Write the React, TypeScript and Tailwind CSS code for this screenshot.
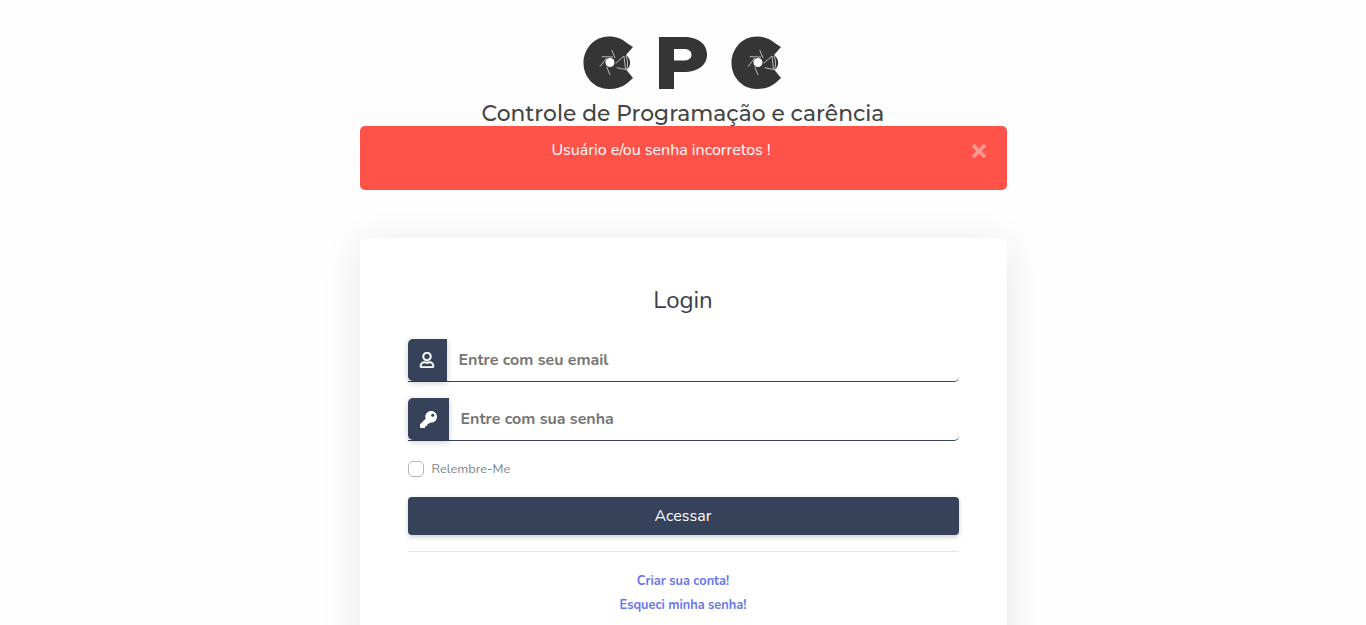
import { FaKey, FaRegUser, FaTimes } from 'react-icons/fa';

// camera-shutter "C" used twice in the logo
function LogoC() {
  return (
    <svg width="52" height="54" viewBox="0 0 52 54" className="block">
      <path
        d="M26 0.500 C33.500 0.500 39.500 3 44.500 7.500 L50 11 L43 19 C48.500 23 48.500 30 43.500 34 L50 42 L44.500 47 C39.500 51 33.500 53 26 53 C11.500 53 0.500 41.500 0.500 27 C0.500 12.500 11.500 0.500 26 0.500 Z"
        fill="#353535"
      />
      <circle cx="27" cy="26.500" r="4.500" fill="#ffffff" />
      <g stroke="#dcdcdc" strokeWidth="0.800" fill="none">
        <path d="M28.700 14 L32 22" />
        <path d="M18.700 20.700 L30 21" />
        <path d="M17 30.700 L23.700 22" />
        <path d="M27 39 L23.700 30.700" />
        <path d="M32.700 27.300 L41 20 L42.500 33.500 L33.700 31.700" />
        <path d="M43 20 C45 24 45 30 43.500 34" />
      </g>
    </svg>
  );
}

function LogoP() {
  return (
    <svg width="48" height="52" viewBox="0 0 48 52" className="block">
      <path
        fillRule="evenodd"
        d="M0 0 H25 C39 0 48 7 48 17.500 C48 28 39 35 25 35 H15 V52 H0 Z M15 12 V23.500 H24 C29.500 23.500 32.500 21.500 32.500 17.500 C32.500 14 29.500 12 24 12 Z"
        fill="#353535"
      />
    </svg>
  );
}

export default function App() {
  return (
    <div className="h-screen overflow-hidden bg-[#fefefe] font-['Nunito','Lato','Noto_Sans',sans-serif]">
      <div className="mx-auto w-[647px]">
        {/* Logo */}
        <div className="flex flex-col items-center pt-[36px]">
          <div className="flex items-center gap-[24px] pr-[1px]">
            <LogoC />
            <LogoP />
            <LogoC />
          </div>
          <div className="mt-[10px] h-[26px] font-['Montserrat','Inter',sans-serif] text-[21.800px] font-medium leading-[27px] text-[#444444]">
            Controle de Programação e carência
          </div>
        </div>

        {/* Alert */}
        <div className="relative h-[64px] rounded-[5px] bg-[#ff534a] pr-[44px] pt-[14px] text-center text-[16px] leading-[20px] text-white">
          Usuário e/ou senha incorretos !
          <FaTimes size={20} className="absolute right-[18px] top-[15px] text-white/40" />
        </div>

        {/* Login card */}
        <div className="mt-[48px] h-[500px] rounded-[6px] bg-white px-[48px] pt-[48px] shadow-[0_8px_40px_rgba(0,0,0,0.1)]">
          <h1 className="text-center text-[24px] leading-[29px] text-[#3a3f4b]">Login</h1>

          <div className="mt-[24px] flex h-[43px] rounded-br-[5px] border-b border-[#36425a]">
            <div className="flex w-[39px] items-center justify-center rounded-l-[5px] bg-[#36425a] shadow-[0_2px_6px_rgba(0,0,0,0.2)]">
              <FaRegUser size={16} color="#ffffff" stroke="#ffffff" strokeWidth={16} />
            </div>
            <div className="flex flex-1 items-center pb-[1px] pl-[12px] text-[16px] font-bold text-[#757575]">
              Entre com seu email
            </div>
          </div>

          <div className="mt-[16px] flex h-[43px] rounded-br-[5px] border-b border-[#36425a]">
            <div className="flex w-[41px] items-center justify-center rounded-l-[5px] bg-[#36425a] shadow-[0_2px_6px_rgba(0,0,0,0.2)]">
              <FaKey size={17} color="#ffffff" />
            </div>
            <div className="flex flex-1 items-center pb-[1px] pl-[12px] text-[16px] font-bold text-[#757575]">
              Entre com sua senha
            </div>
          </div>

          <div className="mt-[20px] flex h-[16px] items-center">
            <div className="h-[16px] w-[16px] rounded-[5px] border border-[#adb5bd] bg-white" />
            <span className="ml-[8px] pt-[1px] text-[12.800px] text-[#7b838c]">Relembre-Me</span>
          </div>

          <div className="mt-[20px] flex h-[38px] items-center justify-center rounded-[4px] bg-[#36425a] text-[16px] text-white shadow-[0_2px_5px_rgba(0,0,0,0.2)]">
            Acessar
          </div>

          <div className="mt-[16px] border-t border-[#e3e6f0]" />

          <div className="mt-[20px] text-center text-[12.800px] font-bold leading-[18px] text-[#6777ef]">Criar sua conta!</div>
          <div className="mt-[6px] text-center text-[12.800px] font-bold leading-[18px] text-[#6777ef]">Esqueci minha senha!</div>
        </div>
      </div>
    </div>
  );
}
